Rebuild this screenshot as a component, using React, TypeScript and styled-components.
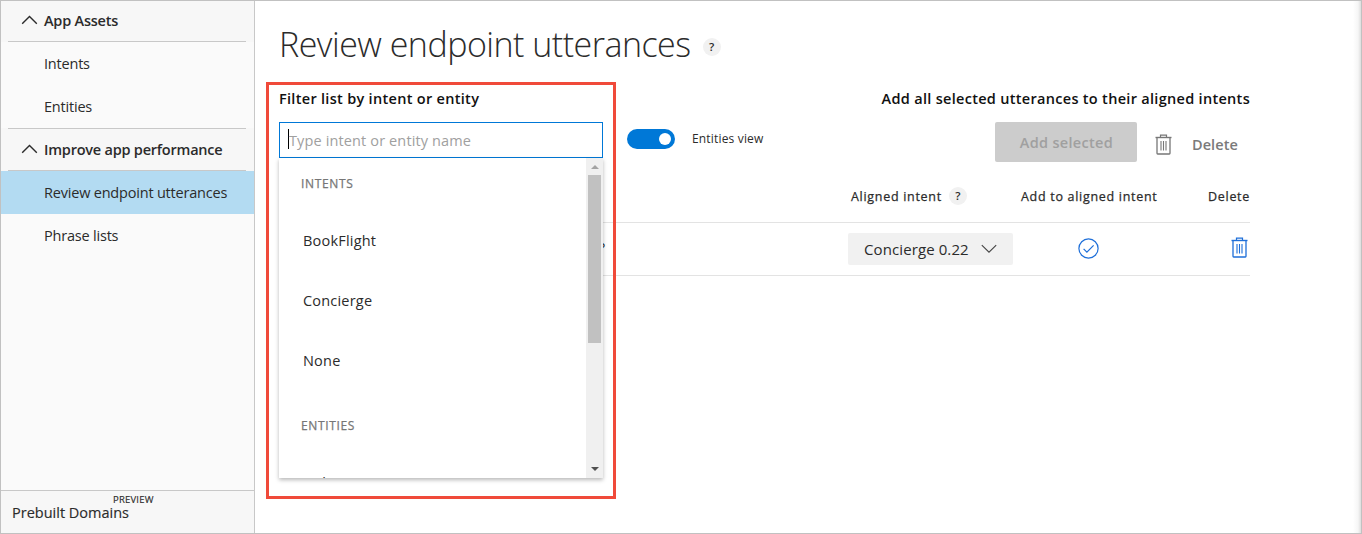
import React from "react";
import styled, { createGlobalStyle, css } from "styled-components";

const GlobalStyle = createGlobalStyle`
  *, *::before, *::after { box-sizing: border-box; }
  body {
    margin: 0;
    background: #fff;
    color: #2b2b2b;
    font-family: "Open Sans", "Noto Sans", sans-serif;
    font-size: 14.5px;
    line-height: 21px;
  }
  h1, h2, p { margin: 0; }
`;

const Frame = styled.div`
  display: flex;
  width: 1362px;
  height: 534px;
  border: 1px solid #c1c1c1;
  overflow: hidden;
`;

const Sidebar = styled.nav`
  display: flex;
  flex-direction: column;
  flex: none;
  width: 254px;
  background: #fafafa;
  border-right: 1px solid #c8c8c8;
`;

const SectionHeader = styled.button<{ $ruled?: boolean }>`
  position: relative;
  display: flex;
  align-items: center;
  gap: 6px;
  height: ${(p) => (p.$ruled ? 43 : 41)}px;
  padding: 0 0 ${(p) => (p.$ruled ? 1 : 3)}px 20px;
  border: 0;
  background: #f7f7f7;
  color: #2b2b2b;
  font: inherit;
  font-weight: 600;
  letter-spacing: -0.22px;
  text-align: left;

  &::after,
  &::before {
    content: "";
    position: absolute;
    left: 7px;
    right: 8px;
    height: 1px;
    background: #c8c8c8;
  }
  &::after { bottom: 0; }
  &::before { top: 0; display: ${(p) => (p.$ruled ? "block" : "none")}; }
`;

const NavItem = styled.a<{ $active?: boolean }>`
  display: flex;
  align-items: center;
  height: 43px;
  padding-left: 43px;
  letter-spacing: -0.2px;
  ${(p) => p.$active && css`background: #b3dbf2;`}
`;

const SidebarFooter = styled.div`
  margin-top: auto;
  display: flex;
  align-items: flex-start;
  height: 43px;
  padding: 11px 0 0 11px;
  border-top: 1px solid #c8c8c8;
  background: #f7f7f7;
  -webkit-text-stroke: 0.15px currentColor;
`;

const PreviewTag = styled.sup`
  margin: -9px 0 0 -16px;
  font-size: 9.5px;
  line-height: 13px;
  letter-spacing: 0.2px;
`;

const Main = styled.main`
  position: relative;
  flex: 1;
  padding: 19px 0 0 24px;
  background: linear-gradient(to left, #dedede, #f6f6f6 3px, #fff 8px);
`;

const TitleRow = styled.div`
  display: flex;
  align-items: center;
  gap: 12px;
  height: 48px;
`;

const Title = styled.h1`
  font-size: 34px;
  line-height: 48px;
  font-weight: 300;
  letter-spacing: -0.51px;
`;

const Help = styled.span`
  display: inline-grid;
  place-items: center;
  width: 18px;
  height: 18px;
  border-radius: 50%;
  background: #f1f1f1;
  font-size: 11.5px;
  line-height: 18px;
  font-weight: 600;
  letter-spacing: 0;
  -webkit-text-stroke: 0;
`;

const TitleHelp = styled(Help)`
  margin-top: 6px;
`;

const Toolbar = styled.section`
  display: flex;
  justify-content: space-between;
  width: 971px;
  margin-top: 20px;
`;

const ToolGroup = styled.div<{ $end?: boolean }>`
  display: flex;
  flex-direction: column;
  gap: 13px;
  align-items: ${(p) => (p.$end ? "flex-end" : "flex-start")};
`;

const GroupLabel = styled.h2`
  color: #111;
  font-size: 14.5px;
  line-height: 21px;
  font-weight: 600;
  letter-spacing: 0.3px;
`;

const Controls = styled.div<{ $pad?: boolean }>`
  display: flex;
  height: 40px;
  padding-right: ${(p) => (p.$pad ? 12 : 0)}px;
`;

const Combo = styled.div`
  position: relative;
  width: 324px;
`;

const SearchBox = styled.div`
  display: flex;
  align-items: center;
  height: 36px;
  padding-left: 8px;
  border: 1px solid #0078d7;
  background: #fff;
  color: #a0a0a0;
  letter-spacing: 0.13px;
`;

const Caret = styled.span`
  width: 1px;
  height: 20px;
  margin-top: -2px;
  background: #000;
`;

const Dropdown = styled.div`
  position: absolute;
  z-index: 2;
  top: 36px;
  left: 0;
  display: flex;
  width: 324px;
  height: 320px;
  background: #fff;
  box-shadow: 0 2px 4px rgba(0, 0, 0, 0.28);
`;

const OptionList = styled.div`
  flex: 1;
  height: 320px;
  overflow: hidden;
`;

const OptionGroup = styled.p<{ $next?: boolean }>`
  height: 52px;
  margin-top: ${(p) => (p.$next ? 10 : 0)}px;
  padding: 15px 0 0 22px;
  color: #767676;
  font-size: 12px;
  letter-spacing: 0.65px;
  -webkit-text-stroke: 0.25px currentColor;
`;

const Option = styled.div`
  display: flex;
  align-items: center;
  height: 60px;
  padding-left: 24px;
  letter-spacing: 0.2px;
`;

const ScrollTrack = styled.div`
  display: flex;
  flex-direction: column;
  align-items: center;
  width: 17px;
  background: #f0f0f0;
`;

const ScrollThumb = styled.div`
  flex: none;
  width: 13px;
  height: 168px;
  background: #c1c1c1;
`;

const ScrollButton = styled.div<{ $down?: boolean }>`
  display: grid;
  place-items: center;
  width: 17px;
  height: 17px;
  padding-bottom: ${(p) => (p.$down ? 2 : 0)}px;
  margin-top: ${(p) => (p.$down ? "auto" : 0)};

  &::before {
    content: "";
    border: 4px solid transparent;
    ${(p) =>
      p.$down
        ? css`border-top-color: #505050; border-bottom: 0;`
        : css`border-bottom-color: #a3a3a3; border-top: 0;`}
  }
`;

const Switch = styled.div`
  display: flex;
  justify-content: flex-end;
  align-items: center;
  width: 48px;
  height: 20px;
  margin: 7px 17px 0 24px;
  padding-right: 4px;
  border-radius: 10px;
  background: #0078d7;

  &::before {
    content: "";
    width: 12px;
    height: 12px;
    border-radius: 50%;
    background: #fff;
  }
`;

const SwitchLabel = styled.span`
  padding-top: 6px;
  font-size: 12px;
  letter-spacing: 0.17px;
`;

const AddButton = styled.button`
  width: 142px;
  height: 40px;
  padding: 0 0 0 1px;
  border: 0;
  border-radius: 2px;
  background: #ccc;
  color: #a0a0a0;
  font: inherit;
  font-weight: 600;
  letter-spacing: 0.3px;
`;

const DeleteAction = styled.div`
  display: flex;
  align-items: center;
  gap: 20px;
  padding: 4px 0 0 18px;
  color: #7a7a7a;
  font-weight: 600;
  letter-spacing: 0.1px;
`;

const Table = styled.div`
  width: 971px;
  margin-top: 8px;
`;

const TableRow = styled.div`
  display: grid;
  grid-template-columns: 327px 242px 173px 137px 92px;
  align-items: center;
  height: 53px;
  border-bottom: 1px solid #e3e3e3;
`;

const HeadCell = styled.div<{ $end?: boolean }>`
  display: flex;
  align-items: center;
  justify-content: ${(p) => (p.$end ? "flex-end" : "flex-start")};
  gap: 7px;
  font-size: 12.5px;
  letter-spacing: 0.7px;
  white-space: nowrap;
  -webkit-text-stroke: 0.25px currentColor;
`;

const AlignedHead = styled(HeadCell)`
  padding-left: 3px;
`;

const Utterance = styled.div`
  padding: 0 1px 3px 0;
  text-align: right;
`;

const IntentSelect = styled.div`
  display: flex;
  align-items: center;
  gap: 12px;
  width: 165px;
  height: 32px;
  padding-left: 16px;
  border-radius: 2px;
  background: #f1f1f1;
  font-size: 15px;
  letter-spacing: 0.1px;
`;

const IconCell = styled.div<{ $end?: boolean }>`
  display: flex;
  justify-content: ${(p) => (p.$end ? "flex-end" : "center")};
  padding: 0 2px ${(p) => (p.$end ? 3 : 2)}px 0;
`;

const Highlight = styled.div`
  position: absolute;
  z-index: 3;
  top: 81px;
  left: 11px;
  width: 350px;
  height: 417px;
  border: 3px solid #f04a3a;
  pointer-events: none;
`;

const ChevronUp = () => (
  <svg width="17" height="10" viewBox="0 0 17 10" fill="none" stroke="#2b2b2b" strokeWidth="1.4">
    <path d="M1.2 8.7 8.5 1.5l7.3 7.2" />
  </svg>
);

const ChevronDown = () => (
  <svg width="16" height="10" viewBox="0 0 16 10" fill="none" stroke="#444" strokeWidth="1.1">
    <path d="M.8 1.2 8 8.2l7.2-7" />
  </svg>
);

const Trash = ({ color }: { color: string }) => (
  <svg width="17" height="21" viewBox="0 0 17 21" fill="none" stroke={color}>
    <path d="M.5 3.5h16" strokeWidth="1.4" />
    <path d="M5.5 3V1.2h6V3" strokeWidth="1.2" />
    <path d="M2 4v15.3q0 .7.7.7h11.6q.7 0 .7-.7V4" strokeWidth="1.3" />
    <path d="M6 7v9.5M8.5 7v9.5M11 7v9.5" strokeWidth="1.1" />
  </svg>
);

const CheckCircle = () => (
  <svg width="21" height="21" viewBox="0 0 21 21" fill="none" stroke="#1e6fd9" strokeWidth="1.2">
    <circle cx="10.5" cy="10.5" r="9.6" />
    <path d="m5.6 10.8 3.3 3.3 6.7-6.8" />
  </svg>
);

export default function App() {
  return (
    <Frame>
      <GlobalStyle />
      <Sidebar>
        <SectionHeader>
          <ChevronUp />
          App Assets
        </SectionHeader>
        <NavItem>Intents</NavItem>
        <NavItem>Entities</NavItem>
        <SectionHeader $ruled>
          <ChevronUp />
          Improve app performance
        </SectionHeader>
        <NavItem $active>Review endpoint utterances</NavItem>
        <NavItem>Phrase lists</NavItem>
        <SidebarFooter>
          Prebuilt Domains
          <PreviewTag>PREVIEW</PreviewTag>
        </SidebarFooter>
      </Sidebar>
      <Main>
        <TitleRow>
          <Title>Review endpoint utterances</Title>
          <TitleHelp>?</TitleHelp>
        </TitleRow>
        <Toolbar>
          <ToolGroup>
            <GroupLabel>Filter list by intent or entity</GroupLabel>
            <Controls>
              <Combo>
                <SearchBox>
                  <Caret />
                  Type intent or entity name
                </SearchBox>
                <Dropdown>
                  <OptionList>
                    <OptionGroup>INTENTS</OptionGroup>
                    <Option>BookFlight</Option>
                    <Option>Concierge</Option>
                    <Option>None</Option>
                    <OptionGroup $next>ENTITIES</OptionGroup>
                    <Option>Airline</Option>
                  </OptionList>
                  <ScrollTrack>
                    <ScrollButton />
                    <ScrollThumb />
                    <ScrollButton $down />
                  </ScrollTrack>
                </Dropdown>
              </Combo>
              <Switch />
              <SwitchLabel>Entities view</SwitchLabel>
            </Controls>
          </ToolGroup>
          <ToolGroup $end>
            <GroupLabel>Add all selected utterances to their aligned intents</GroupLabel>
            <Controls $pad>
              <AddButton>Add selected</AddButton>
              <DeleteAction>
                <Trash color="#777" />
                Delete
              </DeleteAction>
            </Controls>
          </ToolGroup>
        </Toolbar>
        <Table>
          <TableRow>
            <HeadCell />
            <HeadCell />
            <AlignedHead>
              Aligned intent
              <Help>?</Help>
            </AlignedHead>
            <HeadCell>Add to aligned intent</HeadCell>
            <HeadCell $end>Delete</HeadCell>
          </TableRow>
          <TableRow>
            <Utterance>?</Utterance>
            <div />
            <IntentSelect>
              Concierge 0.22
              <ChevronDown />
            </IntentSelect>
            <IconCell>
              <CheckCircle />
            </IconCell>
            <IconCell $end>
              <Trash color="#1e6fd9" />
            </IconCell>
          </TableRow>
        </Table>
        <Highlight />
      </Main>
    </Frame>
  );
}
